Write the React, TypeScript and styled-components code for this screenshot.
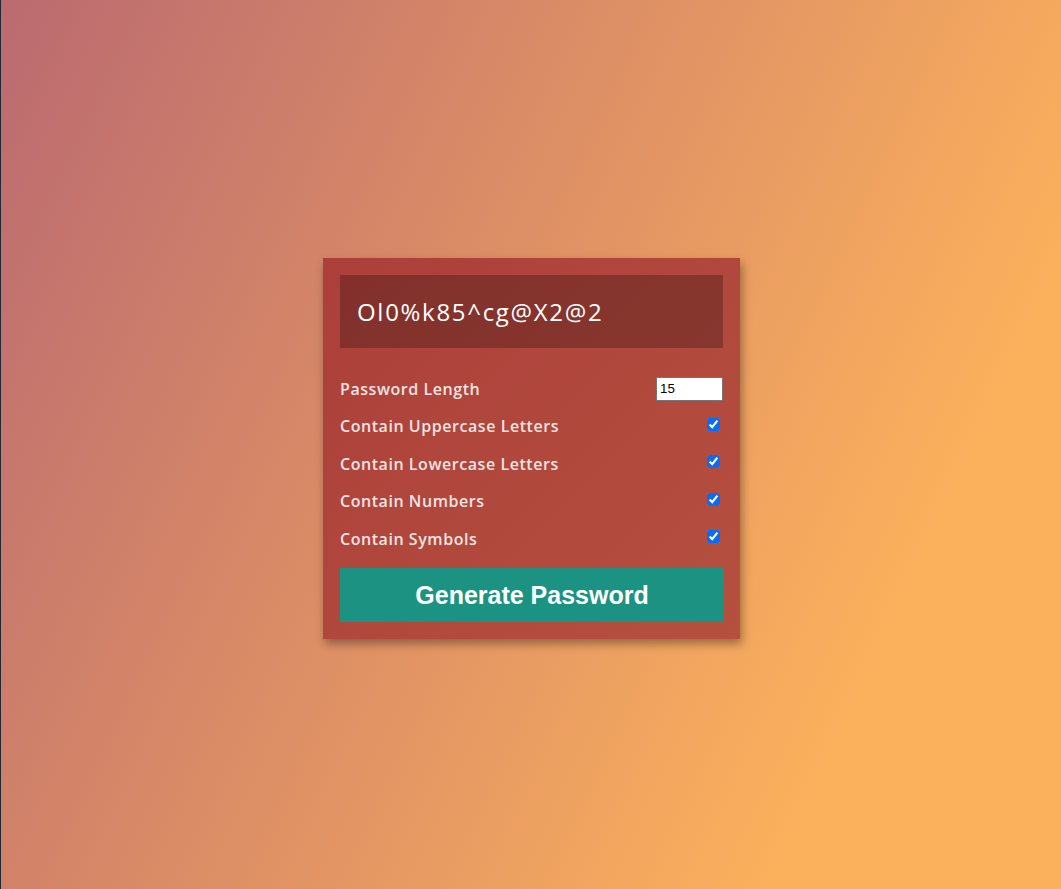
import React, { useState } from "react";
import styled, { createGlobalStyle } from "styled-components";

const GlobalStyle = createGlobalStyle`
  * { box-sizing: border-box; }
  html, body { margin: 0; padding: 0; }
  body {
    font-family: "Open Sans", "Noto Sans", sans-serif;
  }
`;

const Page = styled.div`
  min-height: 889px;
  display: flex;
  align-items: center;
  justify-content: center;
  padding-left: 1px;
  padding-top: 8px;
  border-left: 1px solid #1f2a36;
  background: linear-gradient(115deg, #bb6a70 0%, #fbb05c 80%);
`;

const Card = styled.div`
  width: 417px;
  padding: 17px;
  background: linear-gradient(135deg, #ac3f3a 0%, #b5503f 100%);
  box-shadow: 2px 5px 9px rgba(0, 0, 0, 0.35);
  color: #f1e4e2;
`;

const Result = styled.div`
  height: 73px;
  display: flex;
  align-items: center;
  padding: 0 17px;
  background: rgba(0, 0, 0, 0.24);
  color: #ffffff;
  font-size: 24px;
  font-weight: 500;
  letter-spacing: 1.7px;
`;

const Settings = styled.div`
  margin-top: 22px;
  display: flex;
  flex-direction: column;
`;

const Row = styled.div`
  height: 37.5px;
  display: flex;
  align-items: center;
  justify-content: space-between;
`;

const Label = styled.label`
  font-size: 16px;
  font-weight: 600;
  letter-spacing: 0.55px;
`;

const NumberInput = styled.input`
  width: 67px;
  height: 24px;
  margin: 0;
  padding: 1px 3px;
  border: 1px solid #767676;
  font-family: "Liberation Sans", Arial, sans-serif;
  font-size: 13.3px;
  background: #fff;
  color: #000;
  outline: none;
`;

const Check = styled.input`
  width: 13px;
  height: 13px;
  margin: 1px 3px 5px 4px;
  accent-color: #0a6cf0;
`;

const GenerateButton = styled.button`
  display: block;
  width: 384px;
  height: 54px;
  margin-top: 11px;
  border: none;
  background: #1c9382;
  color: #ffffff;
  font-family: "Liberation Sans", Arial, sans-serif;
  font-size: 25px;
  font-weight: 700;
  cursor: pointer;
`;

const options = [
  "Contain Uppercase Letters",
  "Contain Lowercase Letters",
  "Contain Numbers",
  "Contain Symbols",
];

export default function App() {
  const [length, setLength] = useState("15");
  const [checked, setChecked] = useState([true, true, true, true]);

  return (
    <>
      <GlobalStyle />
      <Page>
        <Card>
          <Result>Ol0%k85^cg@X2@2</Result>
          <Settings>
            <Row>
              <Label>Password Length</Label>
              <NumberInput
                type="number"
                value={length}
                onChange={(e) => setLength(e.target.value)}
              />
            </Row>
            {options.map((o, i) => (
              <Row key={o}>
                <Label>{o}</Label>
                <Check
                  type="checkbox"
                  checked={checked[i]}
                  onChange={() =>
                    setChecked((c) => c.map((v, j) => (j === i ? !v : v)))
                  }
                />
              </Row>
            ))}
          </Settings>
          <GenerateButton>Generate Password</GenerateButton>
        </Card>
      </Page>
    </>
  );
}
